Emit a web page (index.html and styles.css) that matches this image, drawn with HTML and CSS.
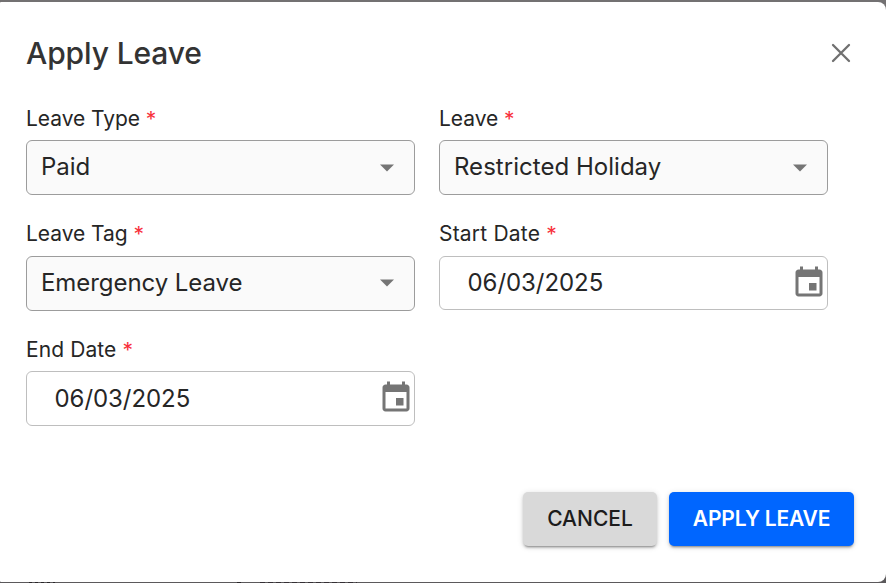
FILE: index.html
```html
<!DOCTYPE html>
<html lang="en">
<head>
<meta charset="utf-8">
<title>Apply Leave</title>
<link rel="stylesheet" href="styles.css">
</head>
<body>
<main class="dialog">
  <header class="head">
    <h1 class="title">Apply Leave</h1>
    <button class="close" aria-label="Close"><svg width="20" height="20" viewBox="0 0 20 20"><path d="M2 2 18 18M18 2 2 18" fill="none" stroke="#707070" stroke-width="2.300" stroke-linecap="round"/></svg></button>
  </header>
  <form class="grid">
    <div class="field">
      <label class="label">Leave Type <span class="req">*</span></label>
      <div class="box select"><span>Paid</span><svg class="arrow" width="14" height="8" viewBox="0 0 14 8"><path d="M0 .4h14L7 7.600z"/></svg></div>
    </div>
    <div class="field">
      <label class="label">Leave <span class="req">*</span></label>
      <div class="box select"><span class="roomy">Restricted Holiday</span><svg class="arrow" width="14" height="8" viewBox="0 0 14 8"><path d="M0 .4h14L7 7.600z"/></svg></div>
    </div>
    <div class="field">
      <label class="label second">Leave Tag <span class="req">*</span></label>
      <div class="box select"><span>Emergency Leave</span><svg class="arrow" width="14" height="8" viewBox="0 0 14 8"><path d="M0 .4h14L7 7.600z"/></svg></div>
    </div>
    <div class="field">
      <label class="label date-label second">Start Date <span class="req">*</span></label>
      <div class="box date"><span>06/03/2025</span><svg class="cal" width="36" height="36" viewBox="0 0 24 24"><path d="M17 12h-5v5h5v-5zM16 1v2H8V1H6v2H5c-1.110 0-1.990.9-1.990 2L3 19c0 1.100.89 2 2 2h14c1.100 0 2-.9 2-2V5c0-1.100-.9-2-2-2h-1V1h-2zm3 18H5V8h14v11z"/></svg></div>
    </div>
    <div class="field">
      <label class="label date-label end-label">End Date <span class="req">*</span></label>
      <div class="box date end"><span>06/03/2025</span><svg class="cal" width="36" height="36" viewBox="0 0 24 24"><path d="M17 12h-5v5h5v-5zM16 1v2H8V1H6v2H5c-1.110 0-1.990.9-1.990 2L3 19c0 1.100.89 2 2 2h14c1.100 0 2-.9 2-2V5c0-1.100-.9-2-2-2h-1V1h-2zm3 18H5V8h14v11z"/></svg></div>
    </div>
  </form>
  <footer class="actions">
    <button class="btn cancel">CANCEL</button>
    <button class="btn apply">APPLY LEAVE</button>
  </footer>
</main>
</body>
</html>
```
FILE: styles.css
```css
* { box-sizing: border-box; }
body {
  margin: 0;
  height: 583px;
  padding: 2px 0 1px;
  overflow: hidden;
  /* dimmed page behind the dialog, with the tops of its text at the bottom edge */
  background:
    repeating-linear-gradient(90deg, #292629 0 3px, #5b595b 3px 6px) 29px 582px / 26px 1px no-repeat,
    linear-gradient(#292629, #292629) 237px 582px / 4px 1px no-repeat,
    repeating-linear-gradient(90deg, #353035 0 5px, #5b595b 5px 8px) 260px 582px / 97px 1px no-repeat,
    linear-gradient(#737172 50%, #5b595b 50%);
  font-family: Inter, sans-serif;
  color: #262626;
}
.dialog {
  height: 580px;
  padding: 27px 32px 0 26px;
  background: #fff;
  border-radius: 1px 8px 8px 1px;
}
.head {
  display: flex;
  align-items: center;
  justify-content: space-between;
  height: 48px;
}
.title {
  margin: 0;
  font-size: 30px;
  font-weight: 450;
  line-height: 48px;
  letter-spacing: -0.12px;
  color: #333;
}
.close {
  display: flex;
  padding: 0;
  margin-right: 3px;
  border: 0;
  background: none;
}
.grid {
  display: grid;
  grid-template-columns: 389px 389px;
  grid-auto-rows: 115.6px;
  column-gap: 24px;
  margin-top: 26px;
}
.label {
  display: block;
  height: 37px;
  font-size: 21px;
  line-height: 31px;
  letter-spacing: -0.05px;
  white-space: nowrap;
}
.second { line-height: 30px; }
.date-label { letter-spacing: 0.2px; }
.end-label { letter-spacing: 0.1px; }
.req { position: relative; top: 1px; color: #f8303c; }
.box {
  display: flex;
  align-items: center;
  justify-content: space-between;
  height: 55px;
  border-radius: 6px;
  font-size: 24px;
  line-height: 53px;
  letter-spacing: -0.06px;
}
.box span { position: relative; top: -1px; }
.box .roomy { letter-spacing: 0.03px; }
.select {
  padding: 0 20px 0 14px;
  border: 1px solid #9c9c9c;
  background: #fafafa;
}
.date {
  height: 54.4px;
  padding: 0 0 0 27.5px;
  border: 1px solid #bebebe;
  letter-spacing: -0.06px;
}
.date.end { height: 55px; }
.date span { top: 0; }
.arrow { fill: #757575; }
.cal { fill: #757575; }
.end .cal { margin-bottom: 1px; }
.actions {
  display: flex;
  justify-content: flex-end;
  gap: 12px;
  margin-top: 42px;
}
.btn {
  height: 54px;
  padding: 0;
  border: 0;
  border-radius: 5px;
  font: 500 21px/54px Inter, sans-serif;
  letter-spacing: 0;
  box-shadow: 0 3px 2px -2px rgba(0,0,0,.28), 0 2px 3px rgba(0,0,0,.16), 0 1px 6px rgba(0,0,0,.12);
}
.cancel { width: 134px; background: #d9d9d9; color: #1c1c1c; }
.apply { width: 185px; background: #0066ff; color: #fff; font-weight: 570; letter-spacing: -0.18px; }
```
